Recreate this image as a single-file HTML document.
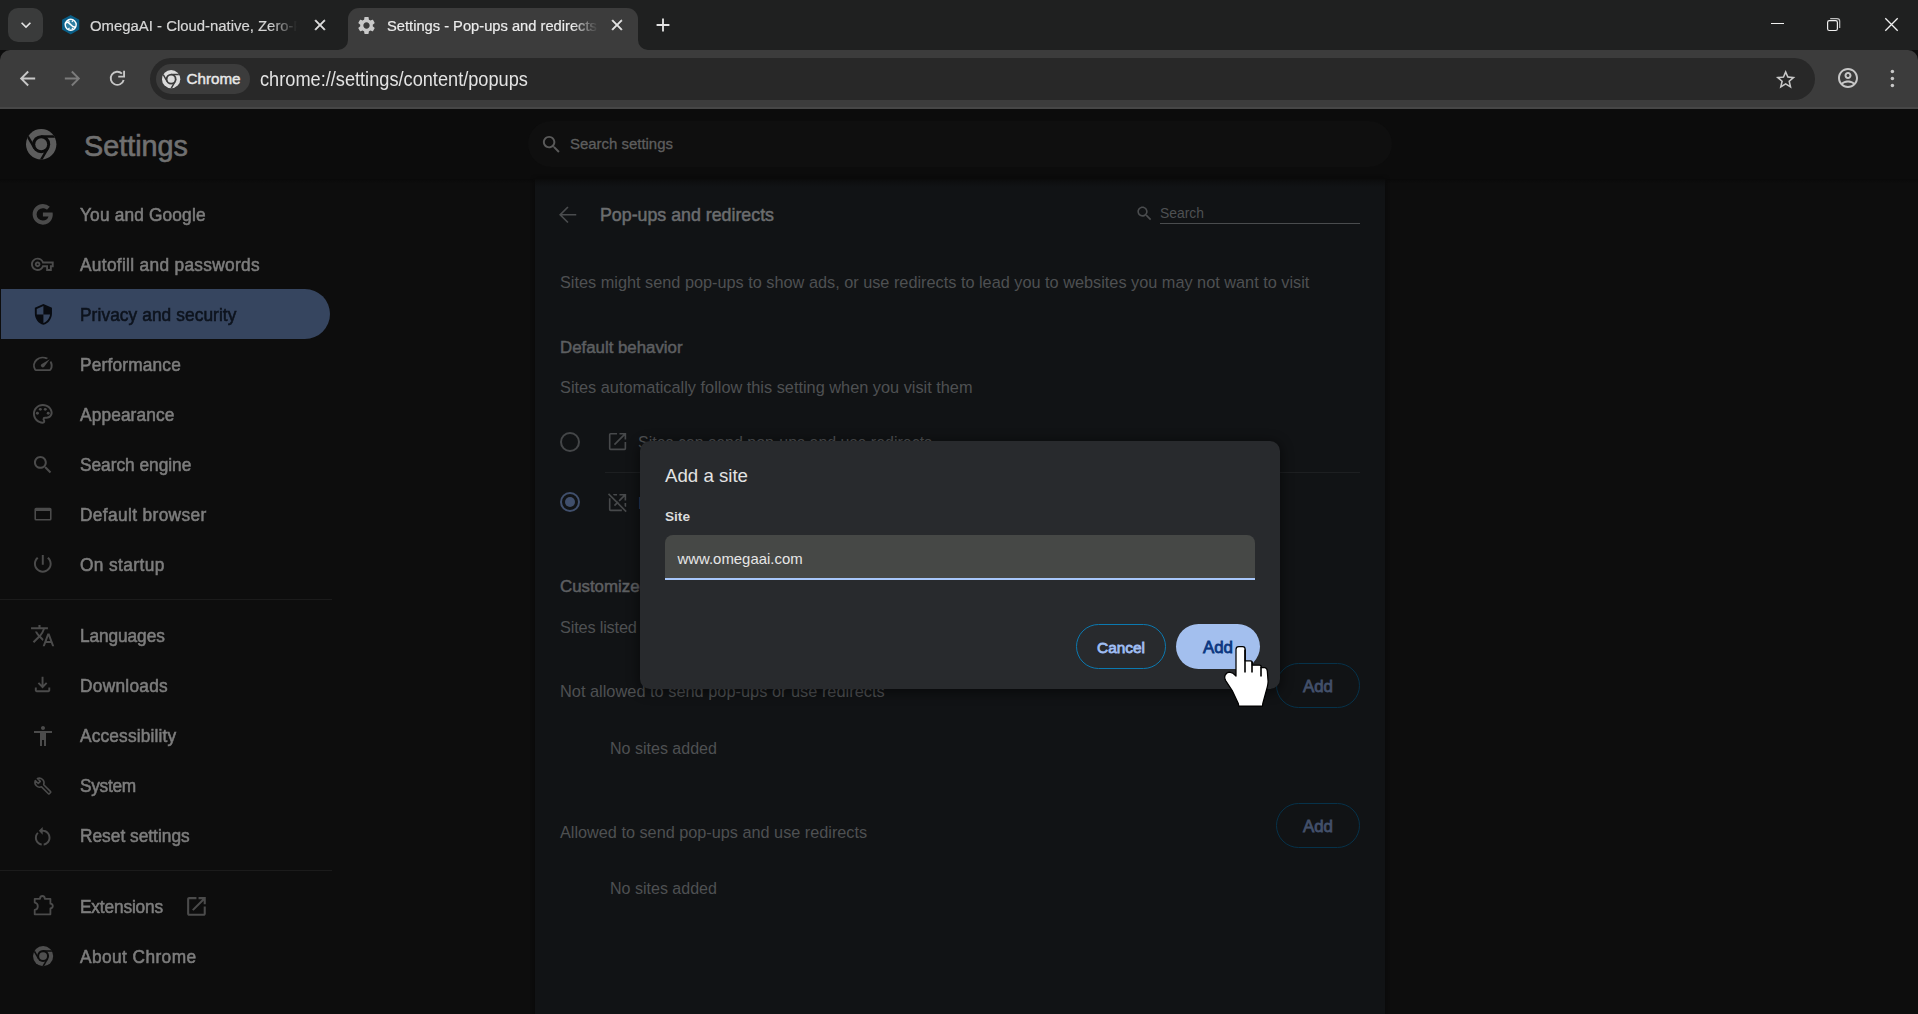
<!DOCTYPE html>
<html>
<head>
<meta charset="utf-8">
<title>Settings - Pop-ups and redirects</title>
<style>
*{box-sizing:border-box;margin:0;padding:0}
html,body{width:1918px;height:1014px;overflow:hidden;background:#0d0d0d;font-family:"Liberation Sans",sans-serif;}
.abs{position:absolute}
svg{display:block;position:absolute;overflow:visible}
#tabstrip{position:absolute;left:0;top:0;width:1918px;height:50px;background:#1f2020}
#toolbar{position:absolute;left:0;top:50px;width:1918px;height:57px;background:#3c3c3c;border-radius:10px 10px 0 0}
#tbline{position:absolute;left:0;top:107px;width:1918px;height:2px;background:#474747}
.t{position:absolute;white-space:nowrap;line-height:1}
#page{position:absolute;left:0;top:109px;width:1918px;height:905px;background:#0d0d0d;overflow:hidden}
</style>
</head>
<body>
<!-- TABSTRIP -->
<div id="tabstrip">
  <div class="abs" style="left:8px;top:8px;width:35px;height:34px;border-radius:10px;background:#3a3b3b"></div>
  <svg style="left:16px;top:15px" width="20" height="20" viewBox="0 0 24 24"><path fill="#e3e3e3" d="M16.59 8.59L12 13.17 7.41 8.59 6 10l6 6 6-6z"/></svg>
  <!-- tab1 favicon -->
  <svg style="left:61.7px;top:15px" width="17.4" height="19.4" viewBox="0 0 17.4 19.4"><path fill="#0a5f88" stroke="#0a5f88" stroke-width="1.400" stroke-linejoin="round" d="M8.700 0.800L16.600 5.200V14.200L8.700 18.600L0.800 14.200V5.200Z"/><circle cx="8.700" cy="9.800" r="5.500" fill="#2e7fa3" stroke="#fff" stroke-width="1.400"/><path d="M4.300 7.600C6.800 5.200 9.300 12.800 13.100 12" fill="none" stroke="#fff" stroke-width="1.700" stroke-linecap="round"/><path d="M6.300 5.400L7.500 6.800M11.100 5.400L9.900 6.800M6.300 14.200L7.500 12.800M11.100 14.200L9.900 12.800" stroke="#fff" stroke-width="1.100"/></svg>
  <div class="t" id="tab1t" style="left:90px;top:19px;font-size:14.9px;color:#d6d6d6;-webkit-text-stroke:0.2px #d6d6d6;width:208px;overflow:hidden;-webkit-mask-image:linear-gradient(to right,#000 180px,transparent 207px)">OmegaAI - Cloud-native, Zero-Footprint</div>
  <svg style="left:311px;top:16.2px" width="18" height="18" viewBox="0 0 24 24"><path fill="#dcdcdc" stroke="#dcdcdc" stroke-width="0.700" d="M19 6.41L17.59 5 12 10.59 6.41 5 5 6.41 10.59 12 5 17.59 6.41 19 12 13.41 17.59 19 19 17.59 13.41 12z"/></svg>
  <!-- active tab -->
  <div class="abs" style="left:348px;top:7.5px;width:290px;height:42.5px;background:#3c3c3c;border-radius:11px 11px 0 0"></div>
  <svg style="left:338px;top:40px" width="10" height="10" viewBox="0 0 10 10"><path fill="#3c3c3c" d="M10 0V10H0A10 10 0 0 0 10 0Z"/></svg>
  <svg style="left:638px;top:40px" width="10" height="10" viewBox="0 0 10 10"><path fill="#3c3c3c" d="M0 0V10H10A10 10 0 0 1 0 0Z"/></svg>
  <svg style="left:356.2px;top:14.5px" width="21" height="21" viewBox="0 0 24 24"><path fill="#c9c9c9" d="M19.14 12.94c.04-.3.06-.61.06-.94 0-.32-.02-.64-.07-.94l2.03-1.58c.18-.14.23-.41.12-.61l-1.92-3.32c-.12-.22-.37-.29-.59-.22l-2.39.96c-.5-.38-1.03-.7-1.62-.94l-.36-2.54c-.04-.24-.24-.41-.48-.41h-3.84c-.24 0-.43.17-.47.41l-.36 2.54c-.59.24-1.13.57-1.62.94l-2.39-.96c-.22-.08-.47 0-.59.22L2.74 8.87c-.12.21-.08.47.12.61l2.03 1.58c-.05.3-.09.63-.09.94s.02.64.07.94l-2.03 1.58c-.18.14-.23.41-.12.61l1.92 3.32c.12.22.37.29.59.22l2.39-.96c.5.38 1.03.7 1.62.94l.36 2.54c.05.24.24.41.48.41h3.84c.24 0 .44-.17.47-.41l.36-2.54c.59-.24 1.13-.56 1.62-.94l2.39.96c.22.08.47 0 .59-.22l1.92-3.32c.12-.22.07-.47-.12-.61l-2.01-1.58zM12 15.6c-1.98 0-3.6-1.62-3.6-3.6s1.620-3.6 3.6-3.6 3.6 1.62 3.6 3.6-1.62 3.6-3.6 3.6z"/></svg>
  <div class="t" id="tab2t" style="left:387px;top:19px;font-size:14.7px;color:#ececec;-webkit-text-stroke:0.2px #ececec;width:211px;overflow:hidden;-webkit-mask-image:linear-gradient(to right,#000 185px,transparent 211px)">Settings - Pop-ups and redirects</div>
  <svg style="left:608px;top:16.2px" width="18" height="18" viewBox="0 0 24 24"><path fill="#e3e3e3" stroke="#e3e3e3" stroke-width="0.700" d="M19 6.41L17.59 5 12 10.59 6.41 5 5 6.41 10.59 12 5 17.59 6.41 19 12 13.41 17.59 19 19 17.59 13.41 12z"/></svg>
  <svg style="left:652px;top:14px" width="22" height="22" viewBox="0 0 24 24"><path fill="#e3e3e3" d="M19 13h-6v6h-2v-6H5v-2h6V5h2v6h6v2z"/></svg>
  <!-- window controls -->
  <div class="abs" style="left:1771px;top:22.5px;width:13px;height:1.3px;background:#f0f0f0"></div>
  <svg style="left:1826px;top:17px" width="15" height="15" viewBox="0 0 15 15"><rect x="1.600" y="3.700" width="9.800" height="9.800" rx="1.800" fill="none" stroke="#f0f0f0" stroke-width="1.200"/><path d="M4.200 1.600h6.800a2.700 2.700 0 0 1 2.700 2.700v6.700" fill="none" stroke="#bdbdbd" stroke-width="1.200"/></svg>
  <svg style="left:1885px;top:18px" width="13" height="13" viewBox="0 0 13 13"><path d="M0.3 0.3L12.7 12.7M12.7 0.3L0.3 12.7" stroke="#f0f0f0" stroke-width="1.3"/></svg>
</div>
<!-- TOOLBAR -->
<div id="toolbar"></div>
<div id="tbline"></div>
<div id="tbicons">
  <svg style="left:16px;top:67px" width="23" height="23" viewBox="0 0 24 24"><path fill="#c7c7c7" d="M20 11H7.83l5.59-5.59L12 4l-8 8 8 8 1.41-1.41L7.83 13H20v-2z"/></svg>
  <svg style="left:61px;top:67px" width="23" height="23" viewBox="0 0 24 24"><path fill="#7b7b7b" d="M12 4l-1.41 1.41L16.17 11H4v2h12.17l-5.58 5.59L12 20l8-8z"/></svg>
  <svg style="left:106.2px;top:67.2px" width="22.6" height="22.6" viewBox="0 0 24 24"><path d="M18.760 13.810A7 7 0 1 1 16.950 7.050" fill="none" stroke="#c7c7c7" stroke-width="2"/><path d="M19.200 4V10.200H13" fill="none" stroke="#c7c7c7" stroke-width="2"/></svg>
  <div class="abs" style="left:150px;top:58px;width:1665px;height:42px;border-radius:21px;background:#282828"></div>
  <div class="abs" style="left:156px;top:64px;width:94px;height:30px;border-radius:15px;background:#3c3c3c"></div>
  <svg style="left:161.80px;top:69.90px" width="18.30" height="18.30" viewBox="0 0 24 24"><circle cx="12" cy="12" r="12" fill="#dcdcdc"/><circle cx="12" cy="12" r="7.100" fill="#3c3c3c"/><clipPath id="cc1687"><circle cx="12" cy="12" r="12"/></clipPath><g clip-path="url(#cc1687)"><path transform="rotate(0 12 12)" d="M12 5.900H24.500" stroke="#3c3c3c" stroke-width="1.900"/><path transform="rotate(120 12 12)" d="M12 5.900H24.500" stroke="#3c3c3c" stroke-width="1.900"/><path transform="rotate(240 12 12)" d="M12 5.900H24.500" stroke="#3c3c3c" stroke-width="1.900"/></g><circle cx="12" cy="12" r="4.700" fill="#dcdcdc"/></svg>
  <div class="t" id="chip" style="left:186.5px;top:71px;font-size:15.2px;color:#e8e8e8;-webkit-text-stroke:0.45px #e8e8e8">Chrome</div>
  <div class="t" id="url" style="left:260px;top:70.5px;font-size:18.2px;color:#e3e3e3;transform:scaleY(1.06);transform-origin:0 80%">chrome://settings/content/popups</div>
  <svg style="left:1773.85px;top:67.85px" width="23.30" height="23.30" viewBox="0 0 24 24"><path fill="#c7c7c7" d="M22 9.24l-7.19-.62L12 2 9.19 8.63 2 9.24l5.46 4.73L5.82 21 12 17.27 18.18 21l-1.63-7.03L22 9.24zM12 15.4l-3.76 2.27 1-4.28-3.32-2.88 4.38-.38L12 6.1l1.71 4.04 4.38.38-3.32 2.88 1 4.28L12 15.4z"/></svg>
  <svg style="left:1835.50px;top:66.30px" width="24.00" height="24.00" viewBox="0 0 24 24"><path fill="#c7c7c7" d="M12 2C6.48 2 2 6.48 2 12s4.48 10 10 10 10-4.48 10-10S17.52 2 12 2zM7.07 18.28c.43-.9 3.05-1.78 4.93-1.78s4.51.88 4.93 1.78C15.57 19.36 13.86 20 12 20s-3.57-.64-4.930-1.72zm11.29-1.45c-1.43-1.74-4.9-2.33-6.36-2.33s-4.93.59-6.36 2.33C4.62 15.49 4 13.82 4 12c0-4.41 3.59-8 8-8s8 3.59 8 8c0 1.82-.62 3.49-1.64 4.83zM12 6c-1.94 0-3.5 1.56-3.5 3.5S10.06 13 12 13s3.5-1.56 3.5-3.500S13.94 6 12 6zm0 5c-.83 0-1.5-.67-1.5-1.5S11.17 8 12 8s1.5.67 1.5 1.5S12.83 11 12 11z"/></svg>
  <svg style="left:1885px;top:65px" width="15" height="28" viewBox="0 0 15 28"><circle cx="7.400" cy="6.600" r="1.750" fill="#c7c7c7"/><circle cx="7.400" cy="13.500" r="1.750" fill="#c7c7c7"/><circle cx="7.400" cy="20.400" r="1.750" fill="#c7c7c7"/></svg>
</div>
<!-- PAGE -->
<div id="page">
<!--SIDEBAR-->
<div class="abs" style="left:0;top:0;width:1918px;height:71px;background:#0c0c0c"></div>
<div class="abs" style="left:0;top:70px;width:1918px;height:5px;background:linear-gradient(#0a0a0a,#0d0d0d)"></div>
<!-- settings logo -->
<svg style="left:25.70px;top:19.80px" width="30.40" height="30.40" viewBox="0 0 24 24"><circle cx="12" cy="12" r="12" fill="#5d5d5d"/><circle cx="12" cy="12" r="7.100" fill="#0c0c0c"/><clipPath id="cc280"><circle cx="12" cy="12" r="12"/></clipPath><g clip-path="url(#cc280)"><path transform="rotate(0 12 12)" d="M12 5.900H24.500" stroke="#0c0c0c" stroke-width="1.900"/><path transform="rotate(120 12 12)" d="M12 5.900H24.500" stroke="#0c0c0c" stroke-width="1.900"/><path transform="rotate(240 12 12)" d="M12 5.900H24.500" stroke="#0c0c0c" stroke-width="1.900"/></g><circle cx="12" cy="12" r="4.700" fill="#5d5d5d"/></svg>
<div class="t" id="s_title" style="left:84px;top:23px;color:#707070;-webkit-text-stroke:0.65px #707070;font-size:28.78px">Settings</div>
<!-- selected -->
<div class="abs" style="left:1px;top:180.3px;width:329px;height:49.7px;background:#36455f;border-radius:0 25px 25px 0"></div>
<style>
.si{position:absolute;left:80px;font-size:17.3px;color:#7d7d7d;white-space:nowrap;line-height:20px;-webkit-text-stroke:0.55px #7d7d7d;transform:scaleY(1.08);transform-origin:0 78.5%}
.ic{fill:#4b4b4b}
.sep{position:absolute;left:0;width:332px;height:1px;background:#1b1b1b}
</style>
<div class="si" id="si1" style="top:96px;letter-spacing:0.169px">You and Google</div>
<div class="si" id="si2" style="top:146px;letter-spacing:0.322px">Autofill and passwords</div>
<div class="si" id="si3" style="top:196px;color:#0d131d;-webkit-text-stroke:0.55px #0d131d;letter-spacing:0.093px">Privacy and security</div>
<div class="si" id="si4" style="top:246px;letter-spacing:0.188px">Performance</div>
<div class="si" id="si5" style="top:296px;letter-spacing:0.130px">Appearance</div>
<div class="si" id="si6" style="top:346px;letter-spacing:-0.012px">Search engine</div>
<div class="si" id="si7" style="top:396px;letter-spacing:0.371px">Default browser</div>
<div class="si" id="si8" style="top:446px;letter-spacing:0.401px">On startup</div>
<div class="sep" style="top:490px"></div>
<div class="si" id="si9" style="top:517px;letter-spacing:-0.092px">Languages</div>
<div class="si" id="si10" style="top:567px;letter-spacing:0.278px">Downloads</div>
<div class="si" id="si11" style="top:617px;letter-spacing:0.167px">Accessibility</div>
<div class="si" id="si12" style="top:667px;letter-spacing:-0.304px">System</div>
<div class="si" id="si13" style="top:717px;letter-spacing:0.013px">Reset settings</div>
<div class="sep" style="top:761px"></div>
<div class="si" id="si14" style="top:788px;letter-spacing:-0.155px">Extensions</div>
<div class="si" id="si15" style="top:838px;letter-spacing:0.422px">About Chrome</div>
<!-- sidebar icons (center x=41) -->
<svg style="left:29.50px;top:92.80px" width="24.70" height="24.70" viewBox="0 0 24 24"><path class="ic" d="M12.545 10.239v3.821h5.445c-.712 2.315-2.647 3.972-5.445 3.972a6.033 6.033 0 1 1 0-12.064c1.498 0 2.866.549 3.921 1.453l2.814-2.814A9.969 9.969 0 0 0 12.545 2C7.021 2 2.543 6.477 2.543 12s4.478 10 10.002 10c8.396 0 10.249-7.85 9.426-11.748l-9.426-.013z"/></svg>
<svg style="left:31.15px;top:144.05px" width="22.70" height="22.70" viewBox="0 0 24 24"><path class="ic" d="M22 19h-6v-4h-2.680c-1.14 2.42-3.6 4-6.32 4-3.86 0-7-3.14-7-7s3.14-7 7-7c2.72 0 5.17 1.58 6.32 4H24v6h-2v4zm-4-2h2v-4h2v-2H11.94l-.23-.67C11.01 8.340 9.11 7 7 7c-2.76 0-5 2.24-5 5s2.24 5 5 5c2.11 0 4.010-1.34 4.71-3.33l.23-.67H18v4zM7 15c-1.650 0-3-1.350-3-3s1.350-3 3-3 3 1.350 3 3-1.350 3-3 3zm0-4c-.55 0-1 .45-1 1s.45 1 1 1 1-.45 1-1-.45-1-1-1z"/></svg>
<svg style="left:31.55px;top:193.70px" width="22.80" height="22.80" viewBox="0 0 24 24"><path fill="#080b11" d="M12 1L3 5v6c0 5.55 3.84 10.74 9 12 5.16-1.26 9-6.45 9-12V5l-9-4zm0 10.990h7c-.53 4.12-3.28 7.79-7 8.940V12H5V6.300l7-3.110v8.800z"/></svg>
<svg style="left:30.85px;top:244.20px" width="23.60" height="21.60" viewBox="0 0 24 24" preserveAspectRatio="none"><path class="ic" d="M20.38 8.570l-1.230 1.850a8 8 0 0 1-.22 7.580H5.070A8 8 0 0 1 15.580 6.850l1.850-1.230A10 10 0 0 0 3.350 19a2 2 0 0 0 1.720 1h13.850a2 2 0 0 0 1.740-1 10 10 0 0 0-.27-10.440zm-9.790 6.840a2 2 0 0 0 2.830 0l5.660-8.490-8.490 5.660a2 2 0 0 0 0 2.830z"/></svg>
<svg style="left:30.85px;top:293.40px" width="23.60" height="23.60" viewBox="0 0 24 24"><path class="ic" d="M12 22C6.490 22 2 17.510 2 12S6.490 2 12 2s10 4.040 10 9c0 3.310-2.690 6-6 6h-1.770c-.28 0-.5.220-.5.500 0 .12.050.23.130.33.410.47.640 1.060.640 1.670A2.500 2.500 0 0 1 12 22zm0-18c-4.410 0-8 3.590-8 8s3.590 8 8 8c.28 0 .5-.22.5-.5a.54.54 0 0 0-.14-.35c-.41-.46-.63-1.050-.63-1.650a2.500 2.500 0 0 1 2.500-2.500H16c2.210 0 4-1.790 4-4 0-3.860-3.590-7-8-7z"/><circle class="ic" cx="6.500" cy="11.500" r="1.500"/><circle class="ic" cx="9.500" cy="7.500" r="1.500"/><circle class="ic" cx="14.500" cy="7.500" r="1.500"/><circle class="ic" cx="17.500" cy="11.500" r="1.500"/></svg>
<svg style="left:30.85px;top:343.80px" width="23.70" height="23.70" viewBox="0 0 24 24"><path class="ic" d="M15.500 14h-.79l-.28-.27C15.410 12.590 16 11.110 16 9.500 16 5.910 13.090 3 9.500 3S3 5.910 3 9.500 5.910 16 9.500 16c1.610 0 3.090-.59 4.230-1.570l.27.28v.79l5 4.990L20.490 19l-4.990-5zm-6 0C7.010 14 5 11.990 5 9.500S7.010 5 9.500 5 14 7.010 14 9.500 11.990 14 9.500 14z"/></svg>
<svg style="left:32.65px;top:397.80px" width="20.00" height="15.00" viewBox="0 0 21 17"><path class="ic" d="M2.6 0.8H18.400Q20.200 0.800 20.200 2.600V13.600Q20.200 15.400 18.400 15.400H2.600Q0.800 15.400 0.800 13.600V2.600Q0.800 0.800 2.600 0.800ZM2.600 4.600V13.700H18.400V4.600Z"/></svg>
<svg style="left:30.85px;top:443.30px" width="23.60" height="23.60" viewBox="0 0 24 24"><path class="ic" d="M13 3h-2v10h2V3zm4.830 2.170l-1.420 1.420C17.990 7.860 19 9.810 19 12c0 3.870-3.130 7-7 7s-7-3.130-7-7c0-2.190 1.010-4.140 2.580-5.420L6.170 5.170C4.230 6.820 3 9.260 3 12c0 4.970 4.030 9 9 9s9-4.030 9-9c0-2.740-1.230-5.180-3.170-6.830z"/></svg>
<svg style="left:29.65px;top:514.05px" width="25.30" height="25.30" viewBox="0 0 24 24"><path class="ic" d="M12.870 15.070l-2.540-2.510.03-.03A17.520 17.520 0 0 0 14.070 6H17V4h-7V2H8v2H1v1.990h11.170C11.500 7.920 10.440 9.750 9 11.350 8.070 10.320 7.300 9.190 6.690 8h-2c.73 1.630 1.730 3.170 2.980 4.560l-5.090 5.020L4 19l5-5 3.110 3.110.76-2.040zM18.500 10h-2L12 22h2l1.120-3h4.750L21 22h2l-4.500-12zm-2.620 7l1.620-4.330L19.120 17h-3.240z"/></svg>
<svg style="left:31.05px;top:564.35px" width="23.10" height="23.10" viewBox="0 0 24 24"><path class="ic" d="M18 15v3H6v-3H4v3c0 1.100.9 2 2 2h12c1.100 0 2-.9 2-2v-3h-2zm-1-4l-1.410-1.410L13 12.170V4h-2v8.170L8.410 9.590 7 11l5 5 5-5z"/></svg>
<svg style="left:30.50px;top:614.75px" width="24.00" height="24.00" viewBox="0 0 24 24"><path class="ic" d="M12 2c1.100 0 2 .9 2 2s-.9 2-2 2-2-.9-2-2 .9-2 2-2zm9 7h-6v13h-2v-6h-2v6H9V9H3V7h18v2z"/></svg>
<svg style="left:32.67px;top:666.90px" width="19.90" height="19.90" viewBox="0 0 24 24"><path fill="none" stroke="#4b4b4b" stroke-width="1.900" stroke-linejoin="round" d="M21.200 18.800l-8.300-8.300c.8-2.100.4-4.500-1.300-6.200-1.700-1.700-4.200-2.100-6.300-1.300l3.500 3.500-2.500 2.500-3.500-3.500c-.9 2.100-.4 4.600 1.300 6.300 1.700 1.700 4.100 2.100 6.200 1.300l8.300 8.300c.3.300.8.300 1.100 0l1.500-1.500c.4-.3.400-.8 0-1.100z"/></svg>
<svg style="left:30.80px;top:716.20px" width="23.40" height="23.40" viewBox="0 0 24 24"><path class="ic" d="M12 5V2L8 6l4 4V7c3.310 0 6 2.690 6 6 0 2.970-2.170 5.430-5 5.910v2.020c3.950-.49 7-3.850 7-7.930 0-4.420-3.580-8-8-8zm-6 8c0-1.650.67-3.150 1.760-4.240L6.340 7.340A8.014 8.014 0 0 0 4 13c0 4.080 3.050 7.440 7 7.930v-2.020c-2.830-.48-5-2.940-5-5.910z"/></svg>
<svg style="left:30px;top:783px" width="26" height="26" viewBox="0 0 26 26"><path d="M4.700 6.800H10Q10 4 12.400 4Q14.800 4 14.800 6.800H20.400V11.700Q22.800 11.900 22.800 14.100Q22.800 16.300 20.400 16.500V22.300H4.700V18Q7.800 17.600 7.800 14.300Q7.800 11 4.700 10.600Z" fill="none" stroke="#4b4b4b" stroke-width="1.800" stroke-linejoin="round"/></svg>
<svg style="left:184.10px;top:785.05px" width="24.90" height="24.90" viewBox="0 0 24 24"><path class="ic" d="M19 19H5V5h7V3H5c-1.110 0-2 .9-2 2v14c0 1.100.89 2 2 2h14c1.100 0 2-.9 2-2v-7h-2v7zM14 3v2h3.590l-9.830 9.830 1.410 1.410L19 6.410V10h2V3h-7z"/></svg>
<svg style="left:32.50px;top:837.20px" width="20.20" height="20.20" viewBox="0 0 24 24"><circle cx="12" cy="12" r="12" fill="#4f4f4f"/><circle cx="12" cy="12" r="7.100" fill="#0d0d0d"/><clipPath id="cc1162"><circle cx="12" cy="12" r="12"/></clipPath><g clip-path="url(#cc1162)"><path transform="rotate(0 12 12)" d="M12 5.900H24.500" stroke="#0d0d0d" stroke-width="1.900"/><path transform="rotate(120 12 12)" d="M12 5.900H24.500" stroke="#0d0d0d" stroke-width="1.900"/><path transform="rotate(240 12 12)" d="M12 5.900H24.500" stroke="#0d0d0d" stroke-width="1.900"/></g><circle cx="12" cy="12" r="4.700" fill="#4f4f4f"/></svg>
<!--/SIDEBAR-->
<!--MAIN-->
<!-- search bar -->
<div class="abs" style="left:528px;top:12px;width:864px;height:46px;border-radius:23px;background:#0f0f0f"></div>
<svg style="left:540px;top:24px" width="23" height="23" viewBox="0 0 24 24"><path fill="#5a5a5a" d="M15.500 14h-.79l-.28-.27C15.410 12.590 16 11.110 16 9.500 16 5.910 13.090 3 9.500 3S3 5.910 3 9.500 5.910 16 9.500 16c1.610 0 3.090-.59 4.230-1.570l.27.28v.79l5 4.990L20.490 19l-4.990-5zm-6 0C7.010 14 5 11.990 5 9.500S7.010 5 9.500 5 14 7.010 14 9.500 11.990 14 9.500 14z"/></svg>
<div class="t" id="m_ss" style="left:570px;top:27.5px;color:#5e5e5e;-webkit-text-stroke:0.3px #5e5e5e;font-size:14.94px">Search settings</div>
<!-- card -->
<div class="abs" style="left:535px;top:70px;width:850px;height:842px;background:#111315;box-shadow:0 0 3px 1px #0a0a0a"></div><div class="abs" style="left:533px;top:69px;width:854px;height:9px;background:linear-gradient(rgba(10,10,10,1),rgba(10,10,10,0.5) 40%,rgba(14,15,17,0))"></div>
<style>
.mt{position:absolute;white-space:nowrap;line-height:20px;font-size:16px;color:#4e5052}
.mh{position:absolute;white-space:nowrap;line-height:20px;font-size:16px;color:#5d5f61;-webkit-text-stroke:0.5px #5d5f61}
</style>
<svg style="left:554.65px;top:92.65px" width="25.5" height="25.5" viewBox="0 0 24 24"><path d="M20 12H5.200M12.200 4.700L4.900 12l7.300 7.300" fill="none" stroke="#4a4c4e" stroke-width="1.600"/></svg>
<div class="t" id="m_title" style="left:600px;top:96px;line-height:20px;color:#6b6d6f;-webkit-text-stroke:0.5px #6b6d6f;font-size:17.80px">Pop-ups and redirects</div>
<svg style="left:1135px;top:95px" width="19" height="19" viewBox="0 0 24 24"><path fill="#4a4c4e" d="M15.500 14h-.79l-.28-.27C15.410 12.590 16 11.110 16 9.500 16 5.910 13.090 3 9.500 3S3 5.910 3 9.500 5.910 16 9.500 16c1.610 0 3.090-.59 4.230-1.570l.27.28v.79l5 4.990L20.490 19l-4.990-5zm-6 0C7.010 14 5 11.990 5 9.500S7.010 5 9.500 5 14 7.010 14 9.500 11.990 14 9.500 14z"/></svg>
<div class="t" id="m_search" style="left:1160px;top:94px;line-height:20px;color:#4e5052;font-size:13.88px">Search</div>
<div class="abs" style="left:1160px;top:114px;width:200px;height:1px;background:#4a4c4e"></div>
<div class="mt" id="m_d1" style="left:560px;top:163px;font-size:16.29px">Sites might send pop-ups to show ads, or use redirects to lead you to websites you may not want to visit</div>
<div class="mh" id="m_h1" style="left:560px;top:229px;font-size:16.84px">Default behavior</div>
<div class="mt" id="m_d2" style="left:560px;top:268px;font-size:16.32px">Sites automatically follow this setting when you visit them</div>
<!-- radios -->
<div class="abs" style="left:560px;top:323px;width:20px;height:20px;border-radius:50%;border:2px solid #444648"></div>
<svg style="left:605.97px;top:320.87px" width="23.07" height="23.07" viewBox="0 0 24 24"><path fill="none" stroke="#47494b" stroke-width="1.700" d="M11.500 3.850H4.700Q3.850 3.850 3.850 4.700V19.300Q3.850 20.150 4.700 20.150H19.300Q20.150 20.150 20.150 19.300V12.500M14 3.850H20.150V10M20.150 3.850L8.800 15.200"/></svg>
<div class="mt" id="m_r1" style="left:638px;top:324.3px;color:#505254;font-size:15.99px">Sites can send pop-ups and use redirects</div>
<div class="abs" style="left:605px;top:362.5px;width:755px;height:1px;background:#1d1f21"></div>
<div class="abs" style="left:560px;top:383px;width:20px;height:20px;border-radius:50%;border:2px solid #404f6c"></div>
<div class="abs" style="left:565px;top:388px;width:10px;height:10px;border-radius:50%;background:#404f6c"></div>
<svg style="left:605.97px;top:381.900px" width="23.07" height="23.07" viewBox="0 0 24 24"><path fill="none" stroke="#47494b" stroke-width="1.700" d="M11.500 3.850H7.500M3.850 7.500V19.300Q3.850 20.150 4.700 20.150H16.500M20.150 16.500V12.500M14 3.850H20.150V10M20.150 3.850L8.800 15.200"/><path d="M4.100 1.900L22 19.800" stroke="#111315" stroke-width="1.600"/><path d="M2.600 3L21 21.400" stroke="#47494b" stroke-width="1.700"/></svg>
<div class="mt" id="m_r2" style="left:638px;top:385.300px;color:#3c4660">Don't allow sites to send pop-ups or use redirects</div>
<div class="mh" id="m_h2" style="left:560px;top:468px;font-size:16.84px">Customized behaviors</div>
<div class="mt" id="m_d3" style="letter-spacing:-0.19px;left:560px;top:508px;font-size:16.33px">Sites listed below follow a custom setting instead of the default</div>
<div class="mt" id="m_n1" style="left:560px;top:572px;font-size:16.36px">Not allowed to send pop-ups or use redirects</div>
<div class="mt" id="m_e1" style="left:610px;top:629px;font-size:16.04px">No sites added</div>
<div class="mt" id="m_n2" style="left:560px;top:713px;font-size:16.25px">Allowed to send pop-ups and use redirects</div>
<div class="mt" id="m_e2" style="left:610px;top:769px;font-size:16.04px">No sites added</div>
<style>
.addb{position:absolute;left:1276px;width:84px;height:45px;border-radius:23px;border:1px solid #06324a;color:#43506a;-webkit-text-stroke:0.8px #43506a;font-size:15px;line-height:45px;text-align:center}
</style>
<div class="addb" style="top:554px"><span  id="m_a1" style="font-size:16.86px">Add</span></div>
<div class="addb" style="top:694px"><span  id="m_a2" style="font-size:16.86px">Add</span></div>
<!--/MAIN-->
<!--DIALOG-->
<div class="abs" style="left:640px;top:332px;width:640px;height:248px;border-radius:10px;background:#282a2d;box-shadow:0 2px 12px 2px rgba(0,0,0,0.45)"></div>
<div class="t" id="d_title" style="left:665px;top:357px;line-height:20px;color:#e3e3e3;font-size:18.66px">Add a site</div>
<div class="t" id="d_site" style="left:665px;top:398px;line-height:20px;font-weight:bold;color:#dcdcdc;font-size:13.64px">Site</div>
<div class="abs" style="left:665px;top:426px;width:590px;height:44px;border-radius:8px 8px 0 0;background:#464846"></div>
<div class="abs" style="left:665px;top:468.600px;width:590px;height:2.400px;background:#a8c7fa"></div>
<div class="t" id="d_val" style="left:677.500px;top:440px;line-height:20px;color:#e6e6e6;font-size:14.91px">www.omegaai.com</div>
<div class="abs" style="left:1076px;top:515px;width:90px;height:45px;border-radius:23px;border:1px solid #0b79b0;color:#a0bef3;-webkit-text-stroke:0.8px #a0bef3;font-size:15px;line-height:45px;text-align:center"><span  id="d_cancel" style="font-size:15.42px">Cancel</span></div>
<div class="abs" style="left:1176px;top:515px;width:84px;height:45px;border-radius:23px;background:#a3bfee;color:#0b3781;-webkit-text-stroke:0.8px #0b3781;font-size:15px;line-height:47px;text-align:center"><span  id="d_add" style="font-size:16.86px">Add</span></div>
<!-- hand cursor -->
<svg style="left:1215px;top:526px" width="65" height="80" viewBox="0 0 65 80"><path d="M21 41V14.500Q21 11.700 23.800 11.700H27.600Q30.200 11.700 30.200 14.500V25.800H35.500Q37.400 25.800 37.400 28V30.200H44.500Q46.300 30.200 46.300 32.200V32.700H49.800Q52 33 52.300 36L53.100 46.500Q53 49.500 52.300 52L47.800 68.500L47.500 71H23.800L23.300 68.500L17.200 55.500L10.800 45.800Q9 42.500 10 40.500Q11.500 37.500 14.500 37.200Q18 37.500 21 41Z" fill="#fff" stroke="#000" stroke-width="1.250" stroke-linejoin="round"/><path d="M30 14.500V37.500M37 27V37.500M46 31.500V41.500" stroke="#000" stroke-width="1.600" fill="none"/></svg>
<!--/DIALOG-->
</div>
</body>
</html>
